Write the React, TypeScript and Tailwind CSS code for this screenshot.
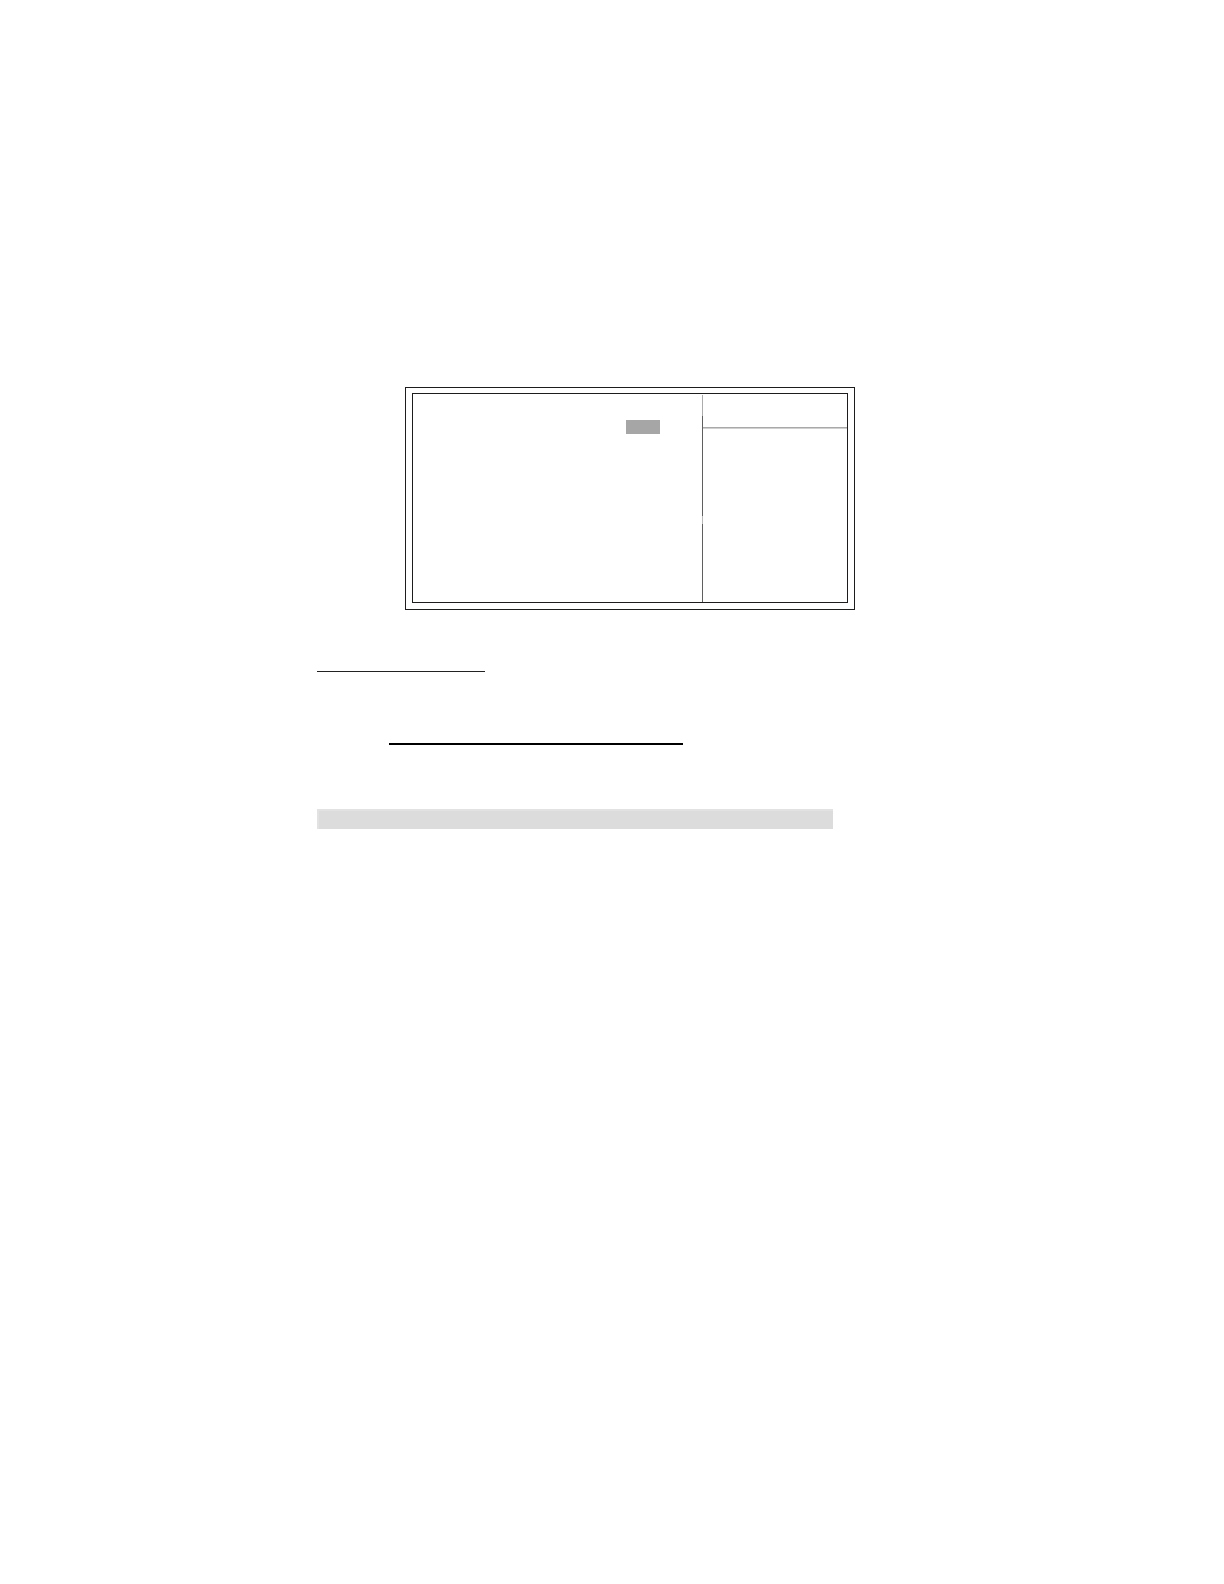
// Setup screen frame: the options on the left, the item help on the right.
function SetupScreen() {
  return (
    <figure className="ml-[88px] -mr-[22px] border border-[#1e1c1d] px-1.5 pt-[5px] pb-1.5">
      <div className="flex h-[210px] border border-[#1e1c1d]">
        <section className="flex flex-2 items-start justify-end pt-[26px] pr-[42px]">
          <div className="h-3.5 w-[34px] bg-[#a6a6a6]" />
        </section>
        <Divider />
        <aside className="w-36">
          <div className="h-[33px]" />
          <div className="h-px bg-[#a9a9a9]" />
          <div className="h-px bg-[#d0d0d0]" />
        </aside>
      </div>
    </figure>
  );
}

// The line between the panes fades at the top and once more halfway down.
function Divider() {
  return (
    <div className="flex w-px flex-col pt-px">
      <div className="h-[21px] bg-[#acacac]" />
      <div className="h-[100px] bg-[#5f5f5f]" />
      <div className="h-2 bg-[#b8b8b8]" />
      <div className="flex-1 bg-[#5f5f5f]" />
    </div>
  );
}

export default function App() {
  return (
    <main className="min-h-screen bg-white pt-[387px] pr-[391px] pl-[317px]">
      <SetupScreen />
      <hr className="mt-[61px] w-[168px] border-t border-[#222222]" />
      <hr className="mt-[71px] ml-[72px] w-[294px] border-t-2 border-black" />
      <div className="mt-16 h-5 border-t-2 border-l-2 border-[#e2e2e2] bg-[#dcdcdc]" />
    </main>
  );
}
